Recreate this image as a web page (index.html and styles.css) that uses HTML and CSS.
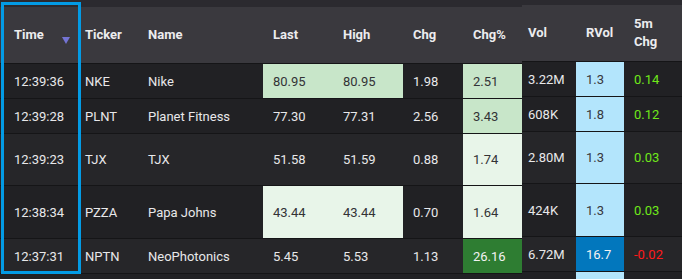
FILE: index.html
```html
<!DOCTYPE html>
<html>
<head>
<meta charset="utf-8">
<link rel="stylesheet" href="styles.css">
</head>
<body>
<div class="screen">
  <div class="pane left">
    <div class="row head">
      <div class="cell time-h">Time <span class="sort"></span></div>
      <div class="cell tick">Ticker</div>
      <div class="cell">Name</div>
      <div class="cell">Last</div>
      <div class="cell">High</div>
      <div class="cell">Chg</div>
      <div class="cell">Chg%</div>
    </div>
    <div class="row r34 dark">
      <div class="cell time">12:39:36</div>
      <div class="cell tick">NKE</div>
      <div class="cell">Nike</div>
      <div class="cell g1">80.95</div>
      <div class="cell g1">80.95</div>
      <div class="cell">1.98</div>
      <div class="cell g1">2.51</div>
    </div>
    <div class="row r34 dark">
      <div class="cell time">12:39:28</div>
      <div class="cell tick">PLNT</div>
      <div class="cell">Planet Fitness</div>
      <div class="cell">77.30</div>
      <div class="cell">77.31</div>
      <div class="cell">2.56</div>
      <div class="cell g1">3.43</div>
    </div>
    <div class="row r51 light">
      <div class="cell time">12:39:23</div>
      <div class="cell tick">TJX</div>
      <div class="cell">TJX</div>
      <div class="cell">51.58</div>
      <div class="cell">51.59</div>
      <div class="cell">0.88</div>
      <div class="cell g0">1.74</div>
    </div>
    <div class="row r52 dark">
      <div class="cell time">12:38:34</div>
      <div class="cell tick">PZZA</div>
      <div class="cell">Papa Johns</div>
      <div class="cell g0">43.44</div>
      <div class="cell g0">43.44</div>
      <div class="cell">0.70</div>
      <div class="cell g0">1.64</div>
    </div>
    <div class="row r34 light">
      <div class="cell time">12:37:31</div>
      <div class="cell tick">NPTN</div>
      <div class="cell">NeoPhotonics</div>
      <div class="cell">5.45</div>
      <div class="cell">5.53</div>
      <div class="cell">1.13</div>
      <div class="cell g3">26.16</div>
    </div>
    <div class="row r34 dark">
      <div class="cell"></div><div class="cell"></div><div class="cell"></div><div class="cell"></div><div class="cell"></div><div class="cell"></div><div class="cell"></div>
    </div>
  </div>
  <div class="pane right">
    <div class="row head">
      <div class="cell vol">Vol</div>
      <div class="cell">RVol</div>
      <div class="cell">5m<br>Chg</div>
    </div>
    <div class="row r34 dark">
      <div class="cell vol">3.22M</div>
      <div class="cell b1">1.3</div>
      <div class="cell up">0.14</div>
    </div>
    <div class="row r34 dark">
      <div class="cell vol">608K</div>
      <div class="cell b1">1.8</div>
      <div class="cell up">0.12</div>
    </div>
    <div class="row r51 light">
      <div class="cell vol">2.80M</div>
      <div class="cell b1">1.3</div>
      <div class="cell up">0.03</div>
    </div>
    <div class="row r52 dark">
      <div class="cell vol">424K</div>
      <div class="cell b1">1.3</div>
      <div class="cell up">0.03</div>
    </div>
    <div class="row r34 light">
      <div class="cell vol">6.72M</div>
      <div class="cell b3">16.7</div>
      <div class="cell down">-0.02</div>
    </div>
    <div class="row r34 dark">
      <div class="cell vol"></div>
      <div class="cell b1"></div>
      <div class="cell"></div>
    </div>
  </div>
  <div class="focus"></div>
</div>
</body>
</html>
```

FILE: styles.css
```css
html, body {
  margin: 0;
  padding: 0;
  background: #2b2a2f;
}
body {
  width: 682px;
  height: 279px;
  overflow: hidden;
  font-family: Roboto, "Liberation Sans", sans-serif;
  font-size: 13px;
  color: #e8e8ea;
}
.screen {
  position: relative;
  display: flex;
  align-items: flex-start;
  width: 682px;
  height: 279px;
  overflow: hidden;
}
.pane {
  display: flex;
  flex-direction: column;
}
.pane.left {
  margin-top: 7px;
  width: 522px;
}
.pane.right {
  margin-top: 5px;
  width: 160px;
}
.row {
  display: grid;
  border-bottom: 1px solid #151517;
}
.left .row {
  grid-template-columns: 81px 57px 125px 70px 70px 60px 59px;
}
.right .row {
  grid-template-columns: 54px 48px 58px;
}
.cell {
  display: flex;
  align-items: center;
  padding-left: 10px;
  white-space: nowrap;
}
.head {
  height: 56px;
  background: #3a393e;
  font-weight: 700;
  color: #ececee;
}
.head .cell {
  line-height: 18px;
}
.r34 { height: 34px; }
.r51 { height: 51px; }
.r52 { height: 52px; }
.dark { background: #212124; }
.light { background: #262629; }
.time, .time-h { padding-left: 14px; }
.tick { padding-left: 4px; }
.vol { padding-left: 6px; }
.time-h {
  position: relative;
}
.sort {
  position: absolute;
  left: 62px;
  top: 30px;
  width: 0;
  height: 0;
  border-left: 4px solid transparent;
  border-right: 4px solid transparent;
  border-top: 7px solid #7474d4;
}
.g1 { background: #c8e6c9; color: #333336; }
.g0 { background: #e8f5e9; color: #333336; }
.g3 { background: #2e7d32; color: #f2f2f2; }
.b1 { background: #b3e5fc; color: #38383c; }
.b3 { background: #0277bd; color: #f2f2f2; }
.up { color: #6fe81a; }
.down { color: #ff1a1a; }
.focus {
  position: absolute;
  left: 1px;
  top: 2px;
  width: 74px;
  height: 266px;
  border: 3px solid #039be5;
  pointer-events: none;
}
```
